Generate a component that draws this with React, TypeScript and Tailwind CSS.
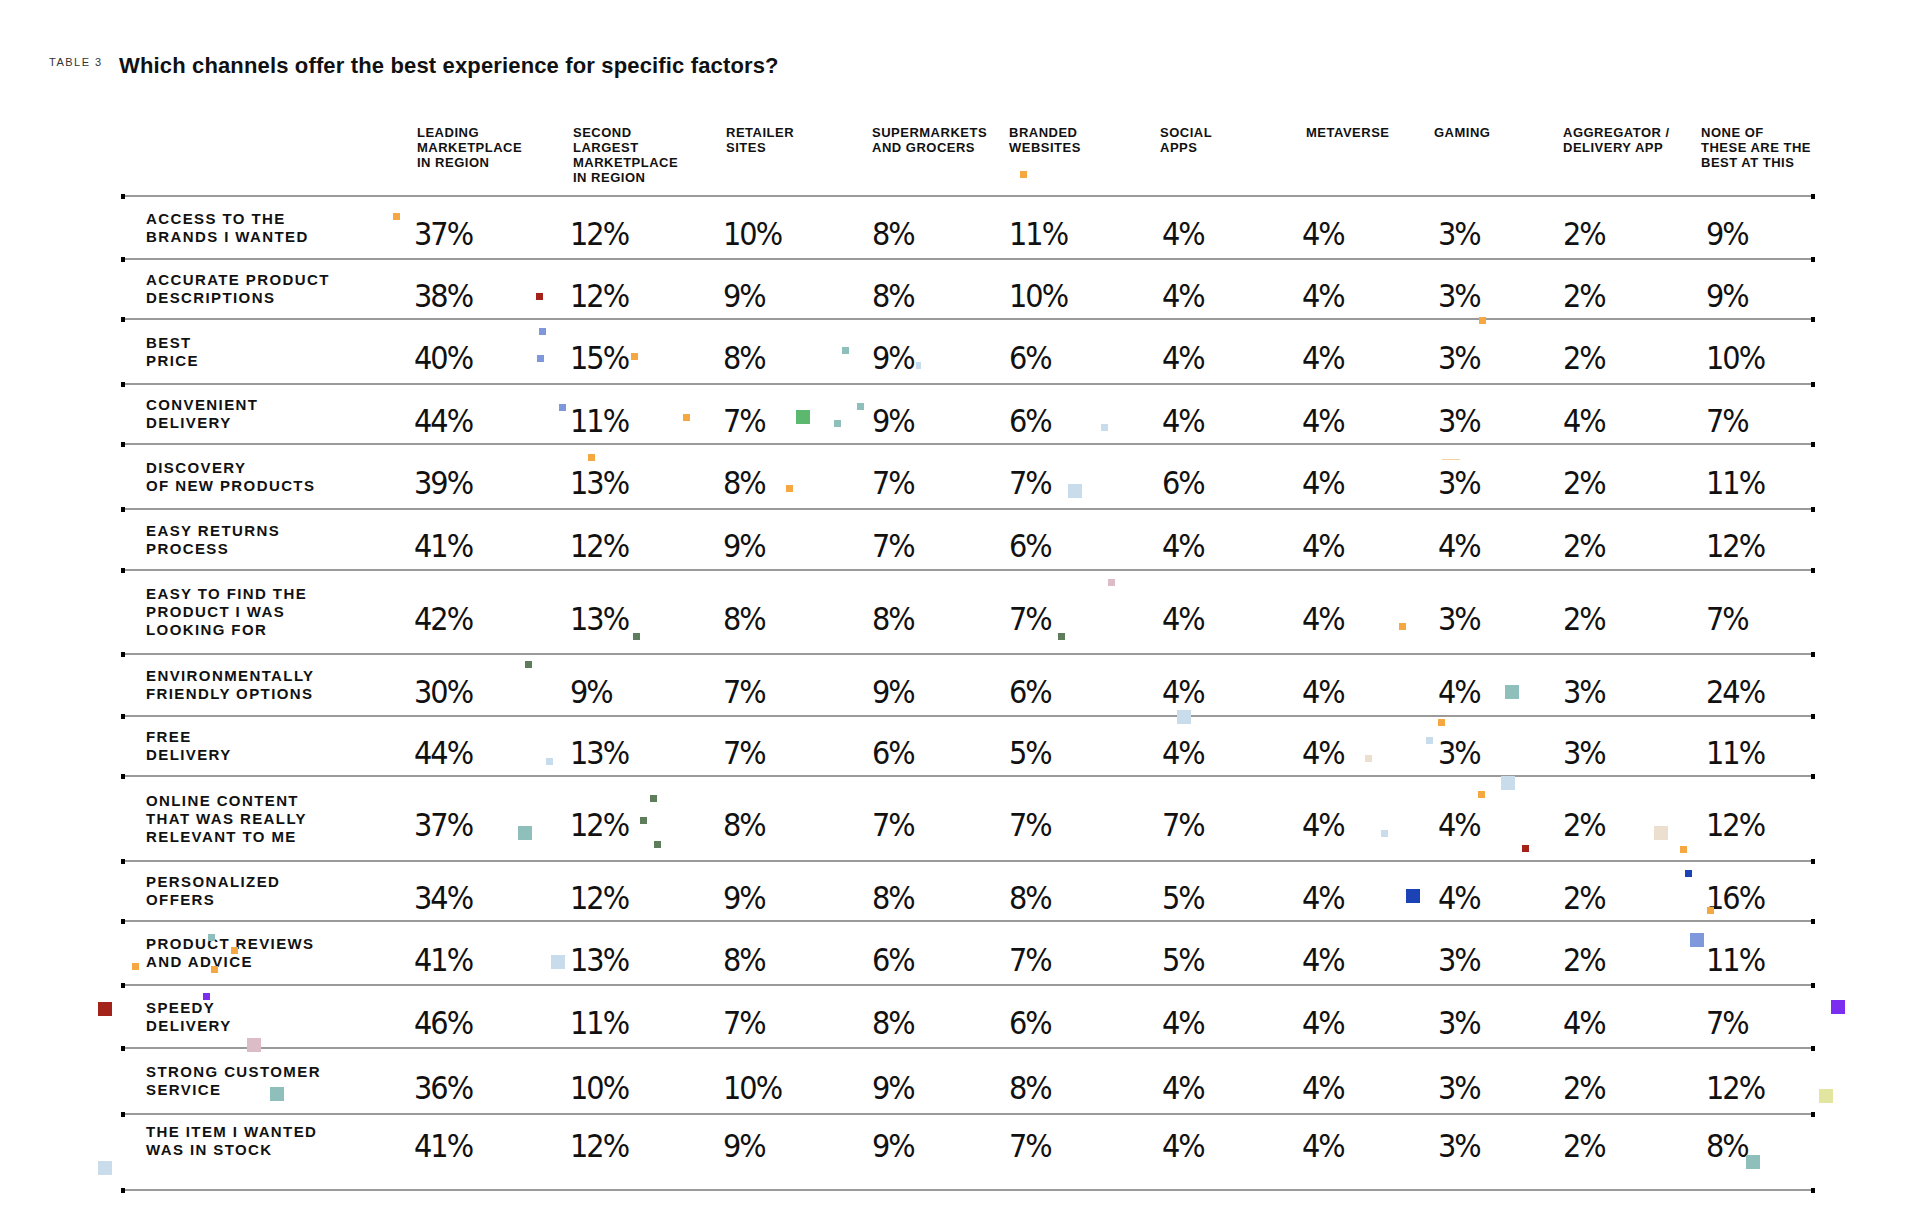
import React from "react";

const COLS =
  "grid grid-cols-[296px_156px_153px_146px_137px_151px_146px_128px_129px_138px_114px]";

const headers: string[][] = [
  ["LEADING", "MARKETPLACE", "IN REGION"],
  ["SECOND", "LARGEST", "MARKETPLACE", "IN REGION"],
  ["RETAILER", "SITES"],
  ["SUPERMARKETS", "AND GROCERS"],
  ["BRANDED", "WEBSITES"],
  ["SOCIAL", "APPS"],
  ["METAVERSE"],
  ["GAMING"],
  ["AGGREGATOR /", "DELIVERY APP"],
  ["NONE OF", "THESE ARE THE", "BEST AT THIS"],
];

const valueOffsets = [
  "-ml-[3px]",
  "-ml-[3px]",
  "-ml-[3px]",
  "ml-0",
  "ml-0",
  "ml-[2px]",
  "-ml-[4px]",
  "ml-[4px]",
  "ml-0",
  "ml-[5px]",
];

type Row = { label: string[]; values: number[]; h: string; last?: boolean };

const rows: Row[] = [
  { label: ["ACCESS TO THE", "BRANDS I WANTED"], values: [37, 12, 10, 8, 11, 4, 4, 3, 2, 9], h: "h-[61px]" },
  { label: ["ACCURATE PRODUCT", "DESCRIPTIONS"], values: [38, 12, 9, 8, 10, 4, 4, 3, 2, 9], h: "h-[58px]" },
  { label: ["BEST", "PRICE"], values: [40, 15, 8, 9, 6, 4, 4, 3, 2, 10], h: "h-[63px]" },
  { label: ["CONVENIENT", "DELIVERY"], values: [44, 11, 7, 9, 6, 4, 4, 3, 4, 7], h: "h-[58px]" },
  { label: ["DISCOVERY", "OF NEW PRODUCTS"], values: [39, 13, 8, 7, 7, 6, 4, 3, 2, 11], h: "h-[63px]" },
  { label: ["EASY RETURNS", "PROCESS"], values: [41, 12, 9, 7, 6, 4, 4, 4, 2, 12], h: "h-[59px]" },
  { label: ["EASY TO FIND THE", "PRODUCT I WAS", "LOOKING FOR"], values: [42, 13, 8, 8, 7, 4, 4, 3, 2, 7], h: "h-[82px]" },
  { label: ["ENVIRONMENTALLY", "FRIENDLY OPTIONS"], values: [30, 9, 7, 9, 6, 4, 4, 4, 3, 24], h: "h-[60px]" },
  { label: ["FREE", "DELIVERY"], values: [44, 13, 7, 6, 5, 4, 4, 3, 3, 11], h: "h-[58px]" },
  { label: ["ONLINE CONTENT", "THAT WAS REALLY", "RELEVANT TO ME"], values: [37, 12, 8, 7, 7, 7, 4, 4, 2, 12], h: "h-[83px]" },
  { label: ["PERSONALIZED", "OFFERS"], values: [34, 12, 9, 8, 8, 5, 4, 4, 2, 16], h: "h-[58px]" },
  { label: ["PRODUCT REVIEWS", "AND ADVICE"], values: [41, 13, 8, 6, 7, 5, 4, 3, 2, 11], h: "h-[62px]" },
  { label: ["SPEEDY", "DELIVERY"], values: [46, 11, 7, 8, 6, 4, 4, 3, 4, 7], h: "h-[61px]" },
  { label: ["STRONG CUSTOMER", "SERVICE"], values: [36, 10, 10, 9, 8, 4, 4, 3, 2, 12], h: "h-[64px]" },
  { label: ["THE ITEM I WANTED", "WAS IN STOCK"], values: [41, 12, 9, 9, 7, 4, 4, 3, 2, 8], h: "h-[74px]", last: true },
];

const squares: string[] = [
  "left-[393px] top-[213px] size-[7px] bg-[#f5a742]",
  "left-[1020px] top-[171px] size-[7px] bg-[#f5a742]",
  "left-[536px] top-[293px] size-[7px] bg-[#a3231a]",
  "left-[539px] top-[328px] size-[7px] bg-[#7f98db]",
  "left-[537px] top-[355px] size-[7px] bg-[#7f98db]",
  "left-[631px] top-[353px] size-[7px] bg-[#f5a742]",
  "left-[842px] top-[347px] size-[7px] bg-[#8fbfbb]",
  "left-[916px] top-[362px] w-[5px] h-[7px] bg-[#c9dceb]",
  "left-[559px] top-[404px] size-[7px] bg-[#7f98db]",
  "left-[683px] top-[414px] size-[7px] bg-[#f5a742]",
  "left-[796px] top-[410px] size-[14px] bg-[#5cb86e]",
  "left-[834px] top-[420px] size-[7px] bg-[#8fbfbb]",
  "left-[857px] top-[403px] size-[7px] bg-[#8fbfbb]",
  "left-[588px] top-[454px] size-[7px] bg-[#f5a742]",
  "left-[786px] top-[485px] size-[7px] bg-[#f5a742]",
  "left-[633px] top-[633px] size-[7px] bg-[#5e7e5b]",
  "left-[525px] top-[661px] size-[7px] bg-[#5e7e5b]",
  "left-[1479px] top-[317px] size-[7px] bg-[#f5a742]",
  "left-[1101px] top-[424px] size-[7px] bg-[#c9dceb]",
  "left-[1442px] top-[459px] w-[18px] h-[1px] bg-[#f5cf9c]",
  "left-[1068px] top-[484px] size-[14px] bg-[#c9dceb]",
  "left-[1108px] top-[579px] size-[7px] bg-[#dcbcc6]",
  "left-[1399px] top-[623px] size-[7px] bg-[#f5a742]",
  "left-[1058px] top-[633px] size-[7px] bg-[#5e7e5b]",
  "left-[1505px] top-[685px] size-[14px] bg-[#8fbfbb]",
  "left-[546px] top-[758px] size-[7px] bg-[#c9dceb]",
  "left-[650px] top-[795px] size-[7px] bg-[#5e7e5b]",
  "left-[640px] top-[817px] size-[7px] bg-[#5e7e5b]",
  "left-[654px] top-[841px] size-[7px] bg-[#5e7e5b]",
  "left-[518px] top-[826px] size-[14px] bg-[#8fbfbb]",
  "left-[208px] top-[934px] size-[7px] bg-[#8fbfbb]",
  "left-[231px] top-[947px] size-[7px] bg-[#f5a742]",
  "left-[132px] top-[963px] size-[7px] bg-[#f5a742]",
  "left-[211px] top-[966px] size-[7px] bg-[#f5a742]",
  "left-[551px] top-[955px] size-[14px] bg-[#c9dceb]",
  "left-[203px] top-[993px] size-[7px] bg-[#7b2ef0]",
  "left-[98px] top-[1002px] size-[14px] bg-[#a3231a]",
  "left-[247px] top-[1038px] size-[14px] bg-[#dcbcc6]",
  "left-[270px] top-[1087px] size-[14px] bg-[#8fbfbb]",
  "left-[98px] top-[1161px] size-[14px] bg-[#c9dceb]",
  "left-[1177px] top-[710px] size-[14px] bg-[#c9dceb]",
  "left-[1438px] top-[719px] size-[7px] bg-[#f5a742]",
  "left-[1426px] top-[737px] size-[7px] bg-[#c9dceb]",
  "left-[1365px] top-[755px] size-[7px] bg-[#eddfd0]",
  "left-[1501px] top-[776px] size-[14px] bg-[#c9dceb]",
  "left-[1478px] top-[791px] size-[7px] bg-[#f5a742]",
  "left-[1381px] top-[830px] size-[7px] bg-[#c9dceb]",
  "left-[1522px] top-[845px] size-[7px] bg-[#a3231a]",
  "left-[1654px] top-[826px] size-[14px] bg-[#eddfd0]",
  "left-[1680px] top-[846px] size-[7px] bg-[#f5a742]",
  "left-[1685px] top-[870px] size-[7px] bg-[#1c43b5]",
  "left-[1406px] top-[889px] size-[14px] bg-[#1c43b5]",
  "left-[1707px] top-[907px] size-[7px] bg-[#f5a742]",
  "left-[1690px] top-[933px] size-[14px] bg-[#7f98db]",
  "left-[1831px] top-[1000px] size-[14px] bg-[#7b2ef0]",
  "left-[1819px] top-[1089px] size-[14px] bg-[#e2e5a0]",
  "left-[1746px] top-[1155px] size-[14px] bg-[#8fbfbb]",
];

function Rule() {
  return (
    <div className="flex h-[2px] items-center">
      <div className="h-[5px] w-[4px] shrink-0 bg-black" />
      <div className="h-[2px] flex-1 bg-[#9a9a9a]" />
      <div className="h-[5px] w-[4px] shrink-0 bg-black" />
    </div>
  );
}

export default function App() {
  return (
    <div className="relative h-[1217px] w-[1920px] overflow-hidden bg-white font-['Liberation_Sans',Arial,sans-serif] text-[#111]">
      <div className="flex items-start pl-[49px] pt-[53px]">
        <div className="mt-[3px] w-[70px] shrink-0 text-[11px] leading-[12px] tracking-[1.5px] text-[#333]">TABLE 3</div>
        <h1 className="text-[22px] font-bold leading-[26px] tracking-[0.15px] text-[#111]">
          Which channels offer the best experience for specific factors?
        </h1>
      </div>

      <div className="ml-[121px] mt-[46px] w-[1694px]">
        <div className={`${COLS} h-[70px] items-start`}>
          <div />
          {headers.map((h, i) => (
            <div key={i} className="text-[13px] font-bold leading-[15px] tracking-[0.5px]">
              {h.map((line, j) => (
                <div key={j} className="whitespace-nowrap">
                  {line}
                </div>
              ))}
            </div>
          ))}
        </div>
        <Rule />
        {rows.map((r, i) => (
          <React.Fragment key={i}>
            <div className={`${COLS} ${r.h} ${r.last ? "items-start pt-[8px]" : "items-center"}`}>
              <div className="pl-[25px] text-[15px] font-bold leading-[18px] tracking-[1.4px]">
                {r.label.map((line, j) => (
                  <div key={j} className="whitespace-nowrap">
                    {line}
                  </div>
                ))}
              </div>
              {r.values.map((v, j) => (
                <div key={j} className={r.last ? "pt-[7px]" : "pt-[13px]"}>
                  <span
                    className={`${valueOffsets[j]} block whitespace-nowrap font-['DejaVu_Sans_Condensed','DejaVu_Sans',sans-serif] text-[32px] leading-[32px] tracking-[-2px] text-[#111]`}
                  >
                    {v}%
                  </span>
                </div>
              ))}
            </div>
            <Rule />
          </React.Fragment>
        ))}
      </div>

      {squares.map((s, i) => (
        <div key={i} className={`absolute ${s}`} />
      ))}
    </div>
  );
}
